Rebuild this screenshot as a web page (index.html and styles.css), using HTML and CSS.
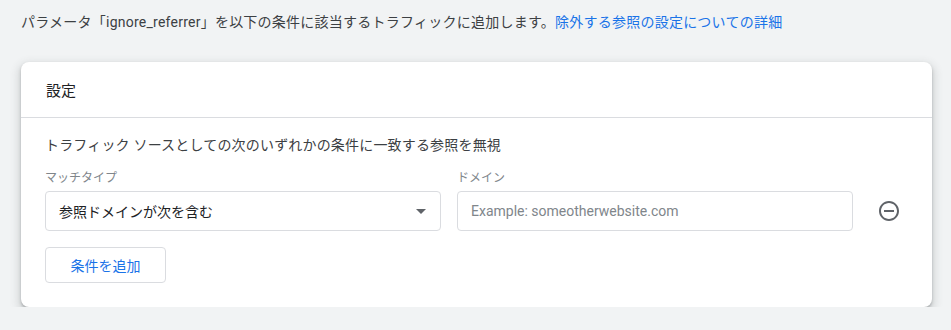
FILE: index.html
```html
<!DOCTYPE html>
<html lang="ja">
<head>
    <meta charset="UTF-8">
    <meta name="viewport" content="width=device-width, initial-scale=1.0">
    <title>参照の除外</title>
    <link rel="stylesheet" href="styles.css">
</head>
<body>
    <p class="intro">
        パラメータ「ignore_referrer」を以下の条件に該当するトラフィックに追加します。<a href="#" class="link">除外する参照の設定についての詳細</a>
    </p>
    <div class="card">
        <div class="card-header">設定</div>
        <div class="card-body">
            <p class="desc">トラフィック ソースとしての次のいずれかの条件に一致する参照を無視</p>
            <div class="row">
                <div class="field">
                    <label class="label">マッチタイプ</label>
                    <div class="select">
                        <span>参照ドメインが次を含む</span>
                        <span class="arrow"></span>
                    </div>
                </div>
                <div class="field">
                    <label class="label">ドメイン</label>
                    <input type="text" class="input" placeholder="Example: someotherwebsite.com">
                </div>
                <button class="remove" title="削除">
                    <svg width="24" height="24" viewBox="0 0 24 24">
                        <path fill="#5f6368" d="M7 11v2h10v-2H7zm5-9C6.48 2 2 6.48 2 12s4.48 10 10 10 10-4.48 10-10S17.52 2 12 2zm0 18c-4.41 0-8-3.59-8-8s3.59-8 8-8 8 3.59 8 8-3.59 8-8 8z"/>
                    </svg>
                </button>
            </div>
            <button class="add">条件を追加</button>
        </div>
    </div>
</body>
</html>
```

FILE: styles.css
```css
body {
    font-family: Roboto, "Noto Sans CJK JP", sans-serif;
    background-color: #f1f3f4;
    color: #3c4043;
    margin: 0;
    padding: 12px 19px 0 21px;
}

.intro {
    margin: 0;
    font-size: 14px;
    line-height: 20px;
    letter-spacing: 0.24px;
}

.link {
    color: #1a73e8;
    text-decoration: none;
}

.card {
    margin-top: 30px;
    width: 911px;
    background-color: #fff;
    border-radius: 8px;
    box-shadow: 0 2px 3px rgba(60, 64, 67, 0.3), 0 4px 8px 3px rgba(60, 64, 67, 0.15);
}

.card-header {
    height: 55px;
    padding-left: 25px;
    display: flex;
    align-items: center;
    font-size: 15px;
    color: #202124;
    border-bottom: 1px solid #dadce0;
}

.card-body {
    padding: 17px 24px 24px 24px;
}

.desc {
    margin: 0;
    font-size: 14px;
    line-height: 20px;
    letter-spacing: 0.18px;
    color: #3c4043;
}

.row {
    display: flex;
    align-items: flex-end;
    gap: 16px;
    margin-top: 15px;
}

.field {
    display: flex;
    flex-direction: column;
    width: 396px;
}

.label {
    font-size: 12px;
    line-height: 16px;
    color: #80868b;
    margin-bottom: 5px;
}

.select {
    height: 40px;
    box-sizing: border-box;
    border: 1px solid #dadce0;
    border-radius: 4px;
    padding: 0 14px 0 13px;
    display: flex;
    align-items: center;
    justify-content: space-between;
    font-size: 14px;
    color: #202124;
}

.arrow {
    width: 0;
    height: 0;
    border-left: 5px solid transparent;
    border-right: 5px solid transparent;
    border-top: 5px solid #5f6368;
}

.input {
    height: 40px;
    box-sizing: border-box;
    border: 1px solid #dadce0;
    border-radius: 4px;
    padding: 0 13px;
    font-family: Roboto, "Noto Sans CJK JP", sans-serif;
    font-size: 14px;
    color: #202124;
    outline: none;
}

.input::placeholder {
    color: #80868b;
}

.remove {
    width: 24px;
    height: 40px;
    margin-left: 8px;
    padding: 0;
    border: none;
    background: none;
    display: flex;
    align-items: center;
    justify-content: center;
    cursor: pointer;
}

.add {
    margin-top: 16px;
    width: 121px;
    height: 36px;
    border: 1px solid #dadce0;
    border-radius: 4px;
    background-color: #fff;
    color: #1a73e8;
    font-family: Roboto, "Noto Sans CJK JP", sans-serif;
    font-size: 14px;
    cursor: pointer;
}
```
